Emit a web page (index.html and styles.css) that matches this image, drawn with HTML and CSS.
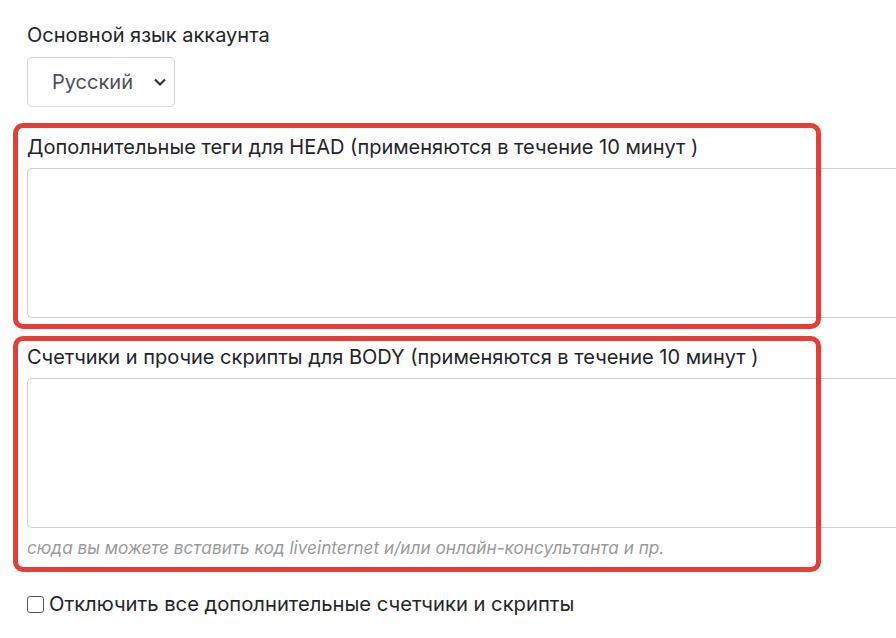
FILE: index.html
```html
<!DOCTYPE html>
<html lang="ru">
<head>
<meta charset="utf-8">
<link rel="stylesheet" href="styles.css">
</head>
<body>
<div class="page">
  <div class="field">
    <label class="label">Основной язык аккаунта</label>
    <div class="select">
      <span class="select-value">Русский</span>
      <svg class="chevron" width="14" height="10" viewBox="0 0 14 10"><path d="M2 2.5 L7 7.5 L12 2.5" fill="none" stroke="#333" stroke-width="2.2"/></svg>
    </div>
  </div>
  <div class="field field-gap">
    <label class="label">Дополнительные теги для HEAD (применяются в течение 10 минут )</label>
    <div class="textarea"></div>
  </div>
  <div class="field field-gap2">
    <label class="label">Счетчики и прочие скрипты для BODY (применяются в течение 10 минут )</label>
    <div class="textarea"></div>
    <div class="hint">сюда вы можете вставить код liveinternet и/или онлайн-консультанта и пр.</div>
  </div>
  <div class="check-row">
    <span class="checkbox"></span>
    <span class="check-label">Отключить все дополнительные счетчики и скрипты</span>
  </div>
  <div class="mark mark-head"></div>
  <div class="mark mark-body"></div>
</div>
</body>
</html>
```
FILE: styles.css
```css
html, body {
  margin: 0;
  padding: 0;
  background: #fff;
  overflow: hidden;
}
.page {
  position: relative;
  width: 896px;
  height: 638px;
  padding: 20px 0 0 27px;
  box-sizing: border-box;
  font-family: "Inter", "Noto Sans", sans-serif;
  color: #212529;
  overflow: hidden;
}
.field {
  display: flex;
  flex-direction: column;
  align-items: flex-start;
}
.label {
  font-size: 20px;
  line-height: 30px;
  display: block;
}
.select {
  margin-top: 7px;
  width: 148px;
  height: 50px;
  box-sizing: border-box;
  border: 1px solid #d4d4d4;
  border-radius: 5px;
  display: flex;
  align-items: center;
  padding: 0 7px 0 24px;
  justify-content: space-between;
}
.select-value {
  font-size: 20px;
  color: #495057;
}
.field-gap {
  margin-top: 25px;
}
.field-gap2 {
  margin-top: 24px;
}
.textarea {
  margin-top: 6px;
  width: 869px;
  height: 150px;
  box-sizing: border-box;
  border: 1px solid #d0d0d0;
  border-right: none;
  border-radius: 5px 0 0 5px;
}
.hint {
  margin-top: 8px;
  font-size: 17.2px;
  line-height: 24px;
  font-style: italic;
  color: #9a9a9a;
}
.check-row {
  margin-top: 29px;
  display: flex;
  align-items: center;
  gap: 5px;
}
.checkbox {
  width: 17px;
  height: 17px;
  border: 1.5px solid #555;
  border-radius: 3px;
  box-sizing: border-box;
}
.check-label {
  font-size: 20.2px;
  line-height: 30px;
}
.mark {
  position: absolute;
  left: 13px;
  width: 808px;
  box-sizing: border-box;
  border: 5px solid #e53e35;
  border-radius: 10px;
}
.mark-head {
  top: 123px;
  height: 206px;
}
.mark-body {
  top: 336px;
  height: 236px;
}
```
